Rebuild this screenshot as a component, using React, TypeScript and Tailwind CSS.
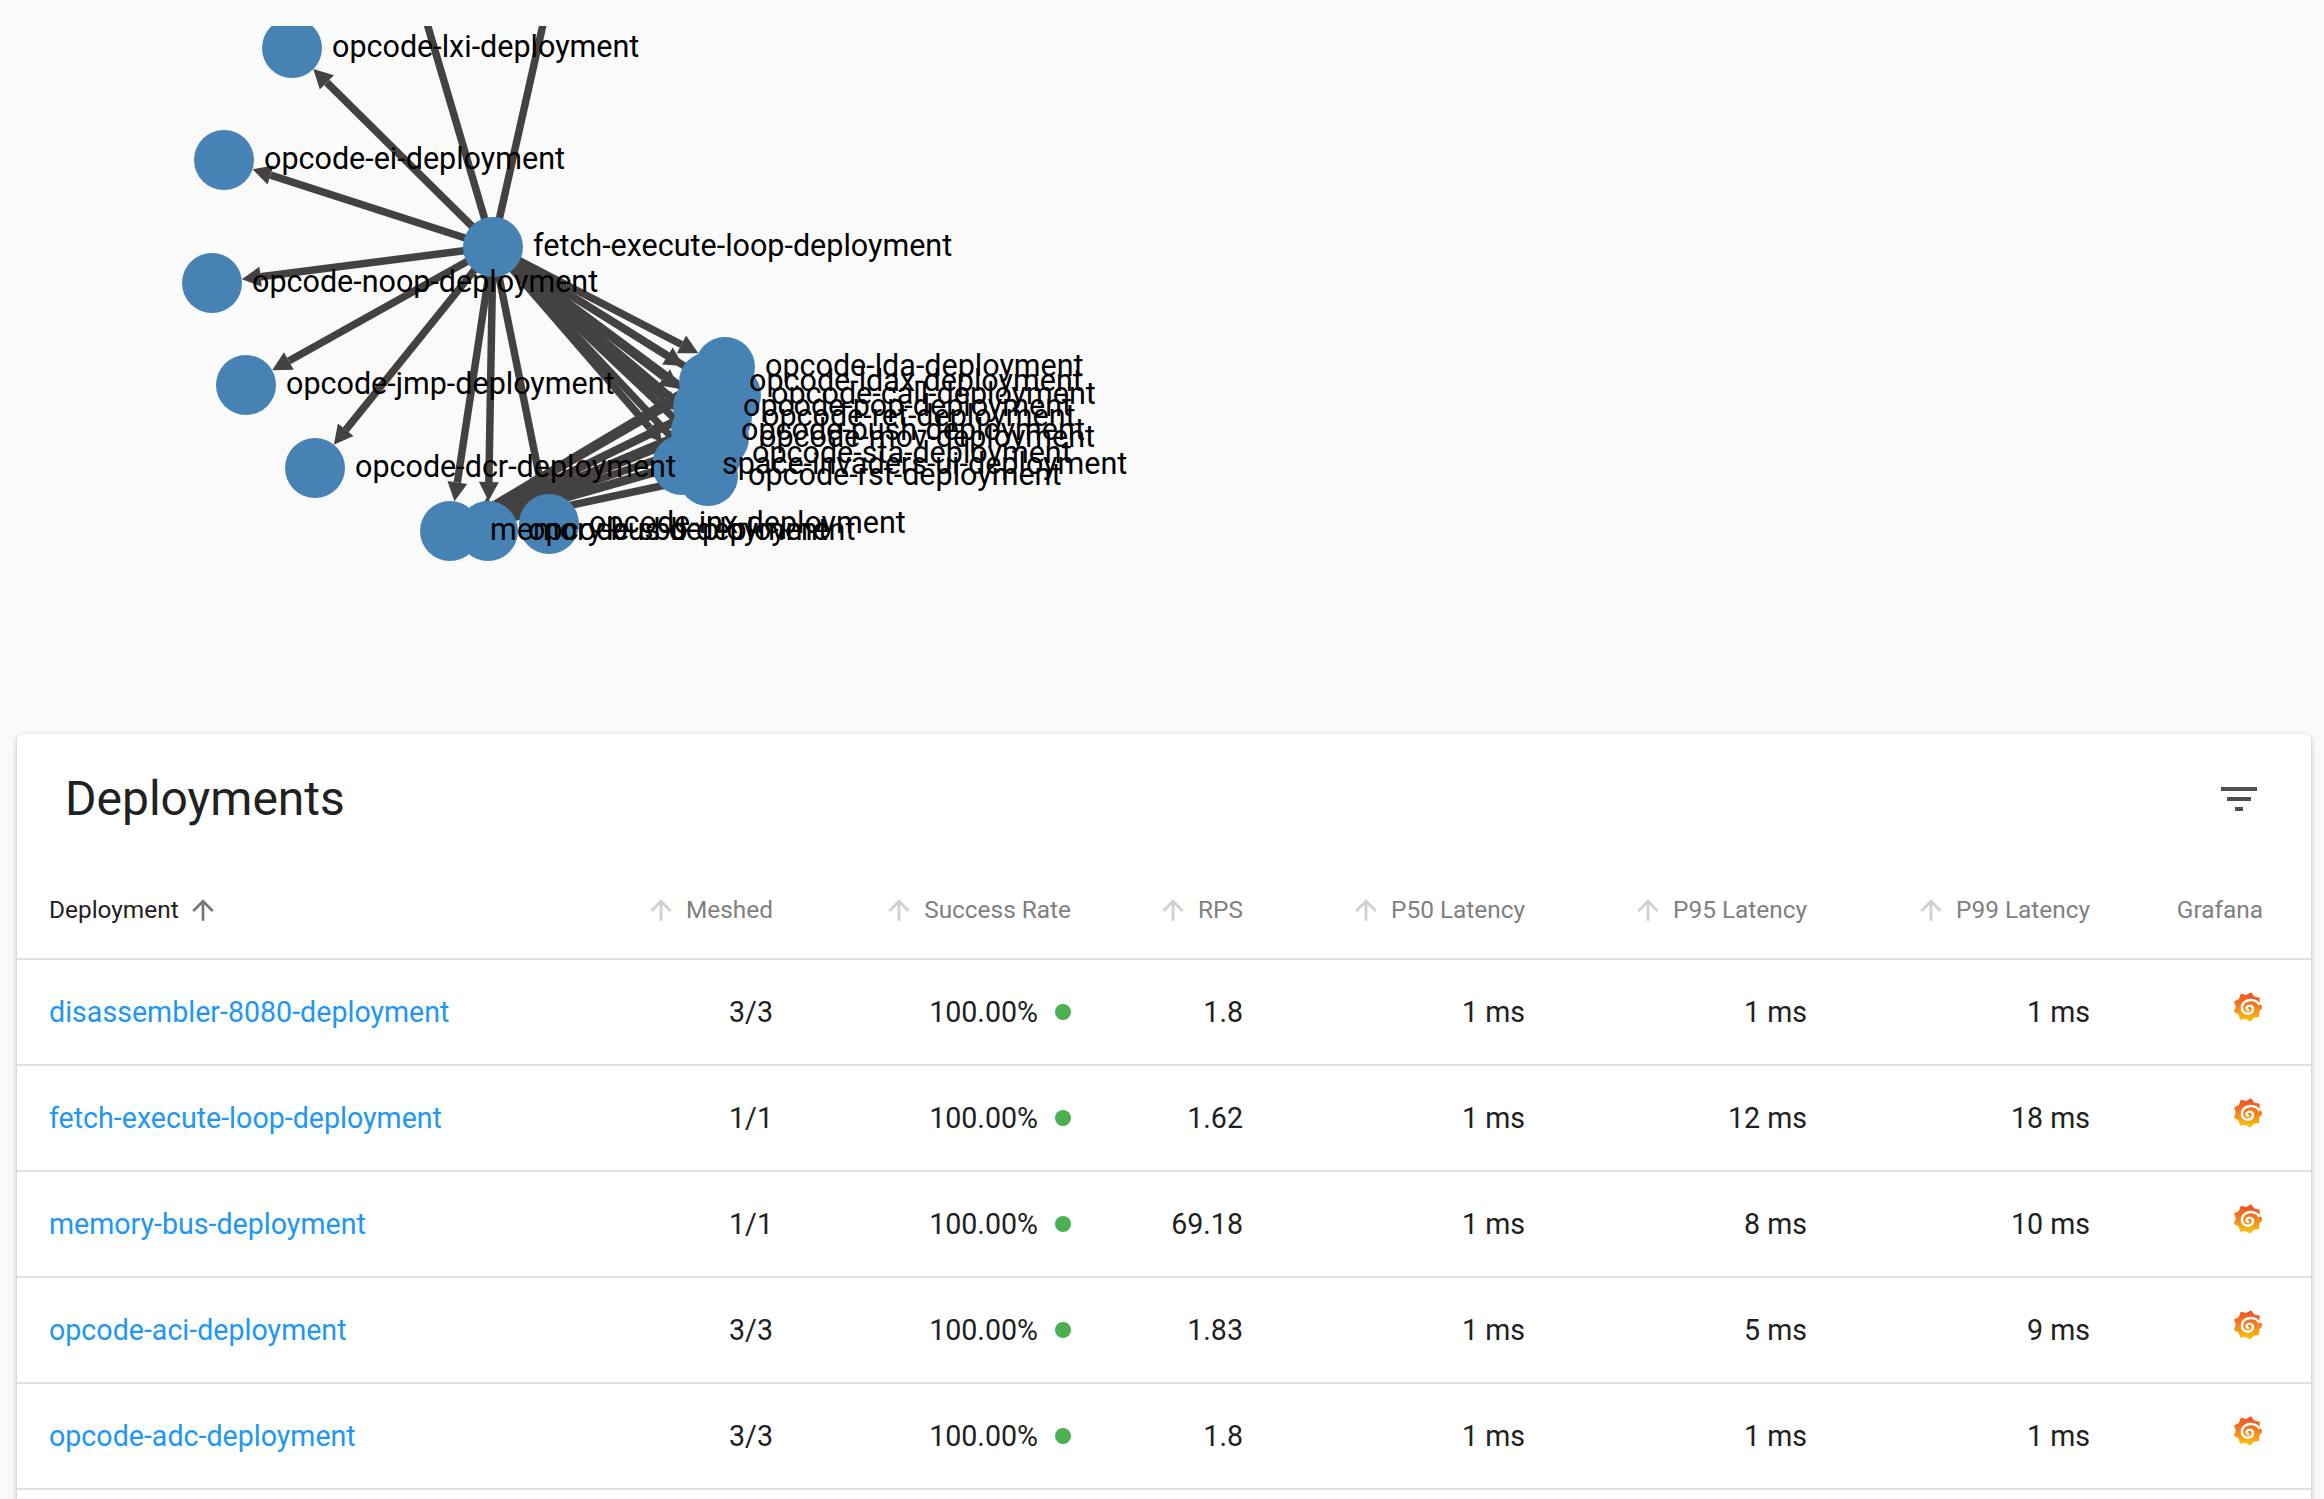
import { useId } from "react";

type GraphNode = { name: string; x: number; y: number };

const fetchNode: GraphNode = { name: "fetch-execute-loop-deployment", x: 493, y: 247 };
const memoryBus: GraphNode = { name: "memory-bus-deployment", x: 450, y: 531 };

const outerNodes: GraphNode[] = [
  { name: "opcode-lxi-deployment", x: 292, y: 48 },
  { name: "opcode-ei-deployment", x: 224, y: 160 },
  { name: "opcode-noop-deployment", x: 212, y: 283 },
  { name: "opcode-jmp-deployment", x: 246, y: 385 },
  { name: "opcode-dcr-deployment", x: 315, y: 468 },
  memoryBus,
  { name: "opcode-sbb-deployment", x: 488, y: 531 },
  { name: "opcode-inx-deployment", x: 549, y: 524 },
];

const clusterNodes: GraphNode[] = [
  { name: "opcode-lda-deployment", x: 725, y: 367 },
  { name: "opcode-ldax-deployment", x: 709, y: 382 },
  { name: "opcode-call-deployment", x: 731, y: 395 },
  { name: "opcode-pop-deployment", x: 703, y: 407 },
  { name: "opcode-ret-deployment", x: 722, y: 417 },
  { name: "opcode-push-deployment", x: 701, y: 431 },
  { name: "opcode-mov-deployment", x: 719, y: 438 },
  { name: "opcode-sta-deployment", x: 712, y: 454 },
  { name: "space-invaders-ui-deployment", x: 682, y: 465 },
  { name: "opcode-rst-deployment", x: 708, y: 476 },
];

const NODE_R = 30;

const Edge = ({ from, to }: { from: GraphNode; to: GraphNode }) => {
  const dx = to.x - from.x;
  const dy = to.y - from.y;
  const len = Math.hypot(dx, dy);
  const ux = dx / len;
  const uy = dy / len;
  const tipX = to.x - ux * NODE_R;
  const tipY = to.y - uy * NODE_R;
  const baseX = tipX - ux * 19;
  const baseY = tipY - uy * 19;
  const wing = `${tipX},${tipY} ${baseX - uy * 10},${baseY + ux * 10} ${baseX + uy * 10},${baseY - ux * 10}`;
  return (
    <g>
      <line x1={from.x} y1={from.y} x2={baseX} y2={baseY} stroke="#444240" strokeWidth={7.5} />
      <polygon points={wing} fill="#444240" />
    </g>
  );
};

const DeploymentGraph = () => {
  const allNodes = [...outerNodes, ...clusterNodes, fetchNode];
  return (
    <svg viewBox="0 26 1300 690" className="block h-[690px] w-[1300px]">
      <line x1={493} y1={247} x2={426} y2={20} stroke="#444240" strokeWidth={7.5} />
      <line x1={493} y1={247} x2={544} y2={20} stroke="#444240" strokeWidth={7.5} />
      {[...outerNodes, ...clusterNodes].map((n) => (
        <Edge key={n.name} from={fetchNode} to={n} />
      ))}
      {clusterNodes.map((n) => (
        <Edge key={`${n.name}-bus`} from={n} to={memoryBus} />
      ))}
      {allNodes.map((n) => (
        <circle key={n.name} cx={n.x} cy={n.y} r={NODE_R} fill="#4682b4" />
      ))}
      {allNodes.map((n) => (
        <text
          key={n.name}
          x={n.x + 40}
          y={n.y + 8.5}
          fontSize={30.5}
          fill="#000"
          style={{ fontFamily: "Roboto, sans-serif" }}
        >
          {n.name}
        </text>
      ))}
    </svg>
  );
};

const starPoints = Array.from({ length: 18 }, (_, i) => {
  const angle = (i * Math.PI) / 9 - Math.PI / 2 + 0.2;
  const r = i % 2 === 0 ? 15 : 12.2;
  return `${(14 + r * Math.cos(angle)).toFixed(2)},${(15 + r * Math.sin(angle)).toFixed(2)}`;
}).join(" ");

const GrafanaIcon = () => {
  const id = useId();
  return (
    <svg viewBox="0 0 28 30" className="block h-[30px] w-[28px]">
      <defs>
        <linearGradient id={id} x1="0" y1="0" x2="0" y2="1">
          <stop offset="0" stopColor="#ee4f23" />
          <stop offset="0.5" stopColor="#f4801f" />
          <stop offset="1" stopColor="#fbca0a" />
        </linearGradient>
      </defs>
      <polygon points={starPoints} fill={`url(#${id})`} />
      <path
        d="M25 12C22 7.5 15 7 11 9.8C7 12.8 7 18.5 10.5 20.8C14 23 19 21 19 17C19 13.8 15 12.5 13 14.8C12 16 12.6 17.6 14 18"
        fill="none"
        stroke="#fff"
        strokeWidth={2.4}
        strokeLinecap="round"
      />
    </svg>
  );
};

const ArrowUp = ({ className }: { className: string }) => (
  <svg viewBox="0 0 24 24" className={className} fill="currentColor">
    <path d="M4 12l1.41 1.41L11 7.83V20h2V7.83l5.58 5.59L20 12l-8-8-8 8z" />
  </svg>
);

const FilterIcon = () => (
  <svg viewBox="0 0 24 24" className="h-12 w-12" fill="#4f4f4f">
    <path d="M10 18h4v-2h-4v2zM3 6v2h18V6H3zm3 7h12v-2H6v2z" />
  </svg>
);

const columns = ["Meshed", "Success Rate", "RPS", "P50 Latency", "P95 Latency", "P99 Latency"];

const rows = [
  { name: "disassembler-8080-deployment", meshed: "3/3", rps: "1.8", p50: "1 ms", p95: "1 ms", p99: "1 ms" },
  { name: "fetch-execute-loop-deployment", meshed: "1/1", rps: "1.62", p50: "1 ms", p95: "12 ms", p99: "18 ms" },
  { name: "memory-bus-deployment", meshed: "1/1", rps: "69.18", p50: "1 ms", p95: "8 ms", p99: "10 ms" },
  { name: "opcode-aci-deployment", meshed: "3/3", rps: "1.83", p50: "1 ms", p95: "5 ms", p99: "9 ms" },
  { name: "opcode-adc-deployment", meshed: "3/3", rps: "1.8", p50: "1 ms", p95: "1 ms", p99: "1 ms" },
];

const cell = "border-b-2 border-[#e0e0e0] pt-[1px] text-right text-[28.6px] font-normal text-[#212121]";

export default function App() {
  return (
    <div className="h-[1499px] overflow-hidden bg-[#fafafa] font-['Roboto',sans-serif]">
      <div className="pt-[26px]">
        <DeploymentGraph />
      </div>

      {/* card carries on below the fold, the list is longer than the window */}
      <div className="ml-[17px] mr-[13px] mt-[18px] min-h-[900px] rounded-[6px] bg-white shadow-[0_2px_6px_rgba(0,0,0,0.2),0_1px_3px_rgba(0,0,0,0.12)]">
        <div className="flex h-[126px] items-start justify-between pl-[48px] pr-[48px] pt-[41px]">
          <h2 className="text-[48px] leading-[48px] font-normal text-[#212121]">Deployments</h2>
          <FilterIcon />
        </div>

        <table className="w-full table-fixed border-separate border-spacing-0">
          <colgroup>
            <col className="w-[584px]" />
            <col className="w-[172px]" />
            <col className="w-[298px]" />
            <col className="w-[172px]" />
            <col className="w-[282px]" />
            <col className="w-[282px]" />
            <col className="w-[283px]" />
            <col className="w-[221px]" />
          </colgroup>
          <thead>
            <tr className="h-[100px]">
              <th className="border-b-2 border-[#e0e0e0] pl-[32px] pt-[2px] text-left text-[24.4px] font-normal text-[#212121]">
                <span className="flex items-center">
                  Deployment
                  <ArrowUp className="ml-[8px] h-8 w-8 text-[#777]" />
                </span>
              </th>
              {columns.map((c) => (
                <th
                  key={c}
                  className="border-b-2 border-[#e0e0e0] pt-[2px] text-right text-[24.4px] font-normal text-[#7f7f7f]"
                >
                  <span className="flex items-center justify-end">
                    <ArrowUp className="mr-[9px] h-8 w-8 text-[#d0d0d0]" />
                    {c}
                  </span>
                </th>
              ))}
              <th className="border-b-2 border-[#e0e0e0] pr-[48px] pt-[2px] text-right text-[24.4px] font-normal text-[#7f7f7f]">
                Grafana
              </th>
            </tr>
          </thead>
          <tbody>
            {rows.map((r) => (
              <tr key={r.name} className="h-[106px]">
                <td className="border-b-2 border-[#e0e0e0] pl-[32px] pt-[1px] text-[28.6px] text-[#2196f3]">{r.name}</td>
                <td className={cell}>{r.meshed}</td>
                <td className={cell}>
                  <span className="flex items-center justify-end">
                    100.00%
                    <span className="mb-[1px] ml-[17px] h-4 w-4 rounded-full bg-[#4caf50]" />
                  </span>
                </td>
                <td className={cell}>{r.rps}</td>
                <td className={cell}>{r.p50}</td>
                <td className={cell}>{r.p95}</td>
                <td className={cell}>{r.p99}</td>
                <td className="border-b-2 border-[#e0e0e0] pr-[49px]">
                  <span className="mb-[10px] flex justify-end">
                    <GrafanaIcon />
                  </span>
                </td>
              </tr>
            ))}
          </tbody>
        </table>
      </div>
    </div>
  );
}
